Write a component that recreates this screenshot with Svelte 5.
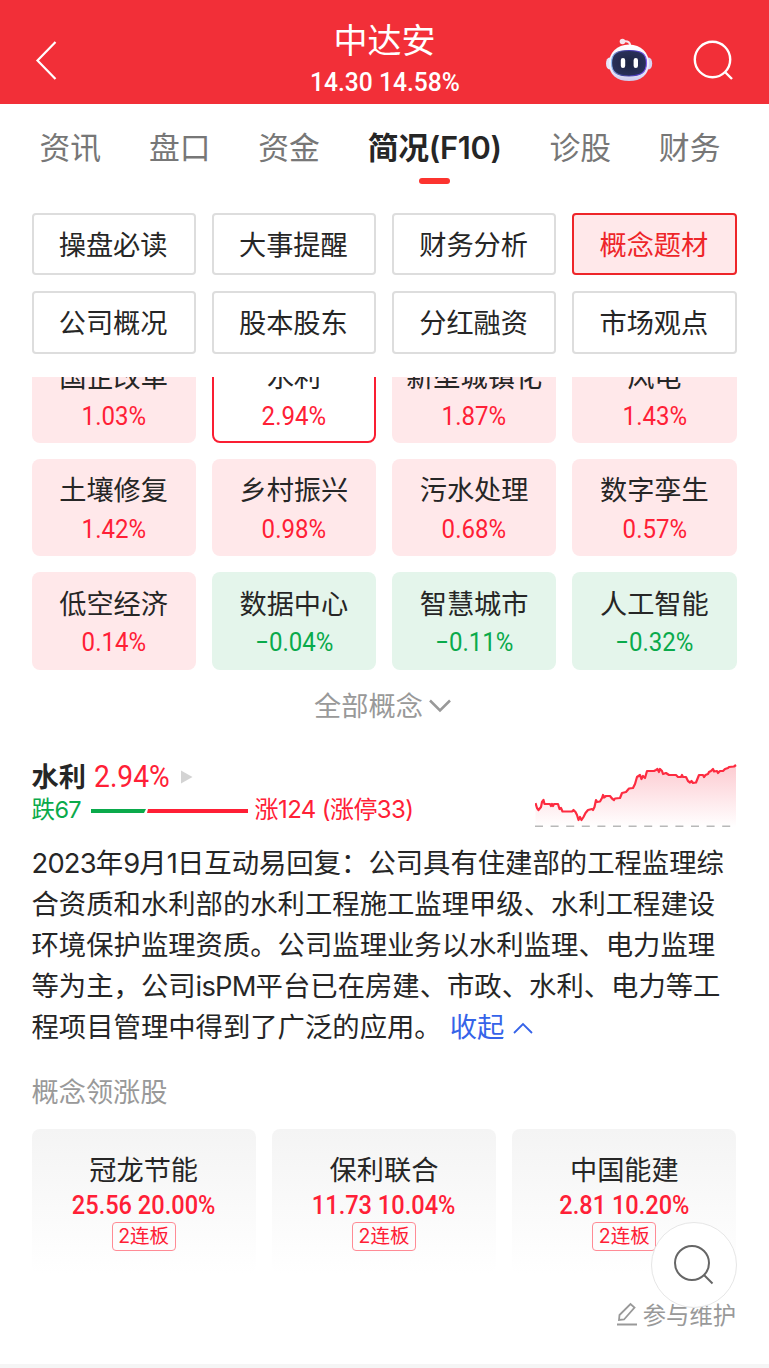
<script>
  const tabs = ['资讯', '盘口', '资金', '简况(F10)', '诊股', '财务'];
  const chips = ['操盘必读', '大事提醒', '财务分析', '概念题材', '公司概况', '股本股东', '分红融资', '市场观点'];
  const concepts = [
    ['国企改革', '1.03%'], ['水利', '2.94%'], ['新型城镇化', '1.87%'], ['风电', '1.43%'],
    ['土壤修复', '1.42%'], ['乡村振兴', '0.98%'], ['污水处理', '0.68%'], ['数字孪生', '0.57%'],
    ['低空经济', '0.14%'], ['数据中心', '−0.04%'], ['智慧城市', '−0.11%'], ['人工智能', '−0.32%']
  ];
  const lines = [
    '2023年9月1日互动易回复：公司具有住建部的工程监理综',
    '合资质和水利部的水利工程施工监理甲级、水利工程建设',
    '环境保护监理资质。公司监理业务以水利监理、电力监理',
    '等为主，公司isPM平台已在房建、市政、水利、电力等工',
    '程项目管理中得到了广泛的应用。'
  ];
  // Latin runs are set slightly tighter than the Chinese text around them.
  const runs = (text) => text.split(/([0-9A-Za-z]+)/).filter(Boolean);
  const isLatin = (run) => /^[0-9A-Za-z]/.test(run);
  const stocks = [
    ['冠龙节能', '25.56 20.00%'], ['保利联合', '11.73 10.04%'], ['中国能建', '2.81 10.20%']
  ];
  const trend = '0.5,39 2,44 3.5,46 6,43 7,38 8.5,36 9.5,40 15,40 16,42 17,40 18,42 19,40 23,40 24.5,45 26,44 27.5,47.5 37,47.5 38.5,46 40.5,48 42,51 43.5,56 45,53 46.5,56 48.5,53 50.5,49 53,46 57,45 58,46 59.5,43 61,36 62,38 65,37.5 67,34 68,31 69,33.5 71,32 75,32 77,34.5 79,36 80,34.5 85,34 87,29 91,28 94,24.5 98,24 100,20 102,13 105,11 106.5,15 108,12 110,14 112,7 119,7 121,6 122.5,5 124,8 125,5 127,7 128,10 131,9 134,11 141,11 143,13 146,13 147,11 148,13 151,13 153,17 155,18.5 156.5,17 158,19 161,18.5 164,11 168,11 169,13 170.5,11 173,10 174,8 176,7 178,5 179,7.5 182,7 183,9 185,7 188,7 190,5 193,4 194,3 199,2.5 201,1';
</script>

<div class="page">
  <header>
    <svg class="back" width="24" height="42" viewBox="0 0 24 42"><path d="M21.500 2 3.500 20.500 21.500 39" /></svg>
    <div class="title">
      <h1>中达安</h1>
      <span class="num price">14.30 14.58%</span>
    </div>
    <div class="tools">
      <svg width="48" height="44" viewBox="0 0 48 44">
        <defs>
          <linearGradient id="shell" x2="0" y2="1"><stop stop-color="#fff" /><stop offset=".7" stop-color="#eceafa" /><stop offset="1" stop-color="#cdcbee" /></linearGradient>
          <linearGradient id="rim" x1="0" x2="1"><stop stop-color="#8fb8f0" /><stop offset=".3" stop-color="#3b3f94" /><stop offset=".7" stop-color="#4d3cc0" /><stop offset="1" stop-color="#7f58ea" /></linearGradient>
          <radialGradient id="face"><stop stop-color="#1d2440" /><stop offset="1" stop-color="#29305a" /></radialGradient>
        </defs>
        <path d="M18 3.500c5-1 7.500 1 7.500 5" stroke="#f8e4ec" stroke-width="2" />
        <circle cx="17.500" cy="3.500" r="2.800" fill="#f5e4ed" />
        <ellipse cx="4.500" cy="25.500" rx="3.500" ry="6" fill="#e6e4f7" />
        <ellipse cx="43.700" cy="25.500" rx="3.500" ry="6" fill="#d8d4f2" />
        <path d="M24 6.500C36 6.500 44 15 44 25c0 12-8 18-20 18S4 37 4 25C4 15 12 6.500 24 6.500Z" fill="url(#shell)" />
        <path d="M24 12.500c12.500 0 17.500 3 17.500 12.500S36 38 24 38 6.500 34.500 6.500 25s5-12.500 17.500-12.500Z" fill="url(#face)" stroke="url(#rim)" stroke-width="1.200" />
        <path d="M18 22.300v5.400M30.800 22.300v5.400" stroke="#fff" stroke-width="4.400" stroke-linecap="round" />
      </svg>
      <svg width="42" height="42" viewBox="0 0 42 42"><circle cx="19.500" cy="20.500" r="17.700" /><path d="m32 33 7 7" /></svg>
    </div>
  </header>

  <nav>
    {#each tabs as t, i}<span class:on={i === 3}>{t}</span>{/each}
  </nav>

  <section class="grid chips">
    {#each chips as c, i}<div class="chip" class:on={i === 3}>{c}</div>{/each}
  </section>

  <section class="viewport">
    <div class="grid concepts">
      {#each concepts as [name, pct], i}
        <div class="concept" class:selected={i === 1} class:down={pct[0] === '−'}>
          <span class="name">{name}</span><span class="num">{pct}</span>
        </div>
      {/each}
    </div>
  </section>

  <div class="all">全部概念<svg width="24" height="16" viewBox="0 0 24 16"><path d="m2 3.500 10 10 10-10" /></svg></div>

  <section class="summary">
    <div>
      <div class="head"><b>水利</b><span class="num">2.94%</span><svg width="12" height="14" viewBox="0 0 12 14"><path d="M0 .5 11.500 7 0 13.500Z" fill="#d3d3d3" /></svg></div>
      <div class="ratio">
        <span class="fall">跌67</span>
        <svg width="157" height="6" viewBox="0 0 157 6"><path d="M0 1h55l-2 4H0Z" fill="#0aaa4b" /><path d="M57 1h100v4H56Z" fill="#ff1f35" /></svg>
        <span class="rise">涨124 (涨停33)</span>
      </div>
    </div>
    <svg class="chart" width="202" height="66" viewBox="0 0 202 66">
      <defs><linearGradient id="fade" x2="0" y2="1"><stop stop-color="#fdcbd1" /><stop offset="1" stop-color="#fff" /></linearGradient></defs>
      <polygon points="{trend} 201,63 0.5,63" fill="url(#fade)" />
      <polyline points={trend} fill="none" stroke="#fd2b40" stroke-width="2.200" stroke-linejoin="round" />
      <path d="M0 62.300h197" stroke="#b8b8b8" stroke-width="1.500" stroke-dasharray="8 7.600" />
    </svg>
  </section>

  <article>
    {#each lines as l, i}
      <p>{#each runs(l) as run}<span class:latin={isLatin(run)}>{run}</span>{/each}{#if i === 4}<a>收起<svg width="20" height="14" viewBox="0 0 20 14"><path d="m1 11 9-9 9 9" /></svg></a>{/if}</p>
    {/each}
  </article>

  <h2>概念领涨股</h2>
  <section class="stocks">
    {#each stocks as [name, value]}
      <div class="stock"><span class="name">{name}</span><span class="num">{value}</span><span class="tag">2连板</span></div>
    {/each}
  </section>

  <footer>
    <svg width="22" height="24" viewBox="0 0 22 24"><path d="M1 22.500h20M3 18l.5-5L14.500 2l4 3.500L8 17.500Z" /></svg>参与维护
  </footer>
  <div class="divider"></div>
  <button class="fab" aria-label="搜索"><svg width="42" height="42" viewBox="0 0 42 42"><circle cx="19" cy="19" r="17" /><path d="m31 31 8.500 8.500" /></svg></button>
</div>

<style>
  :global(body) { margin: 0; background: #fff; }
  .page { position: relative; width: 769px; height: 1368px; overflow: hidden; background: #fff; color: #262626; font-family: Inter, "Noto Sans CJK SC", sans-serif; font-size: 27.2px; display: flex; flex-direction: column; white-space: nowrap; }
  svg { fill: none; flex: none; }
  h1, h2, p { margin: 0; font-weight: 400; }
  .num { font-family: Roboto, sans-serif; font-size: 26px; line-height: 30px; transform: scaleX(.925); color: #ff2036; }
  header { height: 104px; flex: none; background: #f22f38; color: #fff; display: grid; grid-template-columns: 1fr 1fr 1fr; align-items: center; padding: 0 34px; box-sizing: border-box; }
  .back { margin-top: 17px; stroke: #fff; stroke-width: 2.2; }
  .title { display: flex; flex-direction: column; align-items: center; padding-top: 9px; }
  h1 { font-size: 34px; line-height: 50px; }
  .price { color: #fff; font-weight: 500; font-size: 26.6px; line-height: 32px; }
  .tools { display: flex; justify-content: flex-end; align-items: center; gap: 40px; padding-top: 15px; }
  .tools svg:last-child { stroke: #fff; stroke-width: 2.4; }
  nav { height: 109px; flex: none; box-sizing: border-box; padding: 22px 48.5px 0 39.5px; display: flex; justify-content: space-between; font-size: 30.8px; line-height: 44px; color: #777; }
  nav span { display: flex; flex-direction: column; align-items: center; }
  nav .on { color: #262626; font-weight: 600; letter-spacing: -.3px; }
  nav .on::after { content: ""; width: 31px; height: 6px; border-radius: 3px; background: #fc342f; margin-top: 8px; }
  .grid { display: grid; grid-template-columns: repeat(4, 1fr); gap: 16px; }
  .chips { margin: 0 32.5px 0 31.5px; height: 140.5px; flex: none; grid-template-rows: 1fr 1fr; }
  .chip { border: 2px solid #ddd; border-radius: 4px; display: flex; align-items: center; justify-content: center; line-height: 40px; padding: 4px 1px 0 0; }
  .chip.on { border-color: #ee2529; background: #ffe8ea; color: #ee2529; }
  .viewport { height: 292.5px; flex: none; margin: 23.5px 32.5px 0 31.5px; overflow: hidden; display: flex; flex-direction: column; justify-content: flex-end; }
  .concepts { grid-auto-rows: 97.3px; }
  .concept { box-sizing: border-box; border-radius: 8px; background: #ffe8ea; display: flex; flex-direction: column; align-items: center; padding: 12.5px 0 0 0; }
  .concept .name { line-height: 40px; margin-bottom: 2.5px; }
  .selected { background: #fff; border: 2px solid #fa1e32; padding-top: 10.5px; }
  .down { background: #e4f5eb; }
  .down .num { color: #0aaa4b; }
  .all { height: 68px; flex: none; margin-bottom: 5px; display: flex; justify-content: center; align-items: center; gap: 5px; color: #999; padding-right: 3px; }
  .all svg { stroke: #999; stroke-width: 2.5; margin-top: 2px; }
  .summary { height: 100px; flex: none; margin: 0 32px 0 31.5px; display: flex; justify-content: space-between; padding-top: 15px; box-sizing: border-box; }
  .head { height: 38px; display: flex; align-items: center; }
  .head b { line-height: 34px; margin-top: 2px; }
  .head .num { font-size: 30.5px; margin: 0 8px 0 5.5px; }
  .ratio { display: flex; align-items: center; height: 30px; gap: 8px; font-size: 24px; line-height: 30px; }
  .ratio svg { margin: 0 -1px 0 1.5px; }
  .fall { color: #0aaa4b; font-size: 23.5px; letter-spacing: -.6px; margin-top: -1px; }
  .rise { color: #ff2036; font-size: 24px; letter-spacing: -.6px; margin-top: -1px; }
  .chart { margin-top: 6px; }
  article { margin: 0 32px 0 31.5px; height: 207px; flex: none; font-size: 27.35px; line-height: 41.1px; }
  .latin { letter-spacing: -.8px; }
  a { color: #3563e9; margin-left: 8px; }
  a svg { stroke: #3563e9; stroke-width: 1.8; margin-left: 9px; position: relative; top: -1px; }
  h2 { margin: 0 31.5px; height: 79px; flex: none; line-height: 86px; color: #999; font-size: 27.2px; }
  .stocks { margin: 0 32.5px 0 31.5px; display: grid; grid-template-columns: repeat(3, 1fr); gap: 16px; height: 145px; flex: none; }
  .stock { display: flex; flex-direction: column; align-items: center; padding-top: 22.5px; background: linear-gradient(#f4f4f4, #fff); border-radius: 8px; }
  .stock .name { line-height: 40px; }
  .stock .num { font-weight: 500; font-size: 25.5px; line-height: 30px; margin-top: -1px; }
  .tag { box-sizing: border-box; width: 64px; height: 29px; margin-top: 1.5px; border: 1.5px solid #ff8b95; border-radius: 4px; color: #ff2036; font-size: 19.5px; line-height: 26px; text-align: center; }
  footer { height: 80px; flex: none; margin: 0 33px 0 32px; display: flex; justify-content: flex-end; align-items: center; gap: 5px; font-size: 23.3px; color: #999; }
  footer svg { stroke: #999; stroke-width: 1.8; }
  .divider { margin-top: auto; height: 4px; background: #f5f5f5; }
  .fab { position: absolute; left: 650.5px; top: 1221.5px; width: 86px; height: 86px; border: 1.5px solid #e6e6e6; border-radius: 50%; background: rgba(255,255,255,.97); padding: 0; display: grid; place-items: center; }
  .fab svg { stroke: #666; stroke-width: 2; }
</style>
